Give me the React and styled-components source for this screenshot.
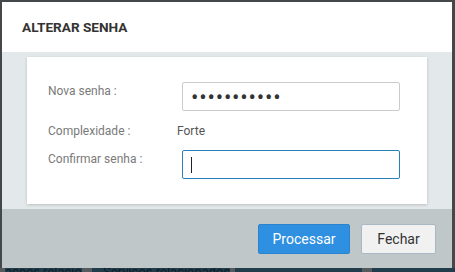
import { styled, createGlobalStyle } from "styled-components";

const GlobalStyle = createGlobalStyle`
    html, body {
        margin: 0;
        padding: 0;
    }
    body {
        font-family: Roboto, "Liberation Sans", Arial, sans-serif;
        background: #45484b;
    }
`

const Screen = styled.div`
    width: 455px;
    height: 272px;
    box-sizing: border-box;
    padding: 2px 3px 0 2px;
    background: #45484b;
    display: flex;
    flex-direction: column;
    overflow: hidden;
`

const Modal = styled.div`
    height: 266px;
    flex: none;
    display: flex;
    flex-direction: column;
    background: #e3e8ea;
`

const Header = styled.div`
    height: 50px;
    flex: none;
    background: #fff;
    display: flex;
    align-items: center;
    padding-left: 20px;
`

const Title = styled.h2`
    margin: 0;
    font-size: 13.6px;
    font-weight: 700;
    color: #333;
`

const Body = styled.div`
    height: 157px;
    box-sizing: border-box;
    padding: 5px 25px;
`

const Card = styled.div`
    height: 147px;
    box-sizing: border-box;
    background: #fff;
    box-shadow: 0 1px 3px rgba(0, 0, 0, 0.18);
    padding: 25px 27px 0 21px;
    display: flex;
    flex-direction: column;
    gap: 11px;
`

const Row = styled.div`
    display: flex;
    align-items: flex-start;
`

const Label = styled.label`
    width: 129px;
    flex: none;
    font-size: 12px;
    line-height: 16px;
    padding-top: 1px;
    color: #7a7a7a;
`

const Value = styled.span`
    font-size: 12px;
    line-height: 16px;
    padding-top: 1px;
    color: #555;
`

const Field = styled.div`
    position: relative;
    margin-left: 5px;
`

const Input = styled.input`
    width: 218px;
    height: 29px;
    box-sizing: border-box;
    border: 1px solid ${p => (p.$focused ? "#2a80b9" : "#cccccc")};
    border-radius: 2px;
    padding: 2px 8px 0;
    font-family: Roboto, "Liberation Sans", sans-serif;
    font-size: 22px;
    letter-spacing: 0.8px;
    color: #333;
    outline: none;
    background: #fff;
`

const Caret = styled.span`
    position: absolute;
    left: 9px;
    top: 7px;
    width: 1px;
    height: 16px;
    background: #222;
`

const Footer = styled.div`
    flex: 1;
    background: #c0c7c9;
    display: flex;
    justify-content: flex-end;
    align-items: flex-start;
    gap: 11px;
    padding: 15px 16px 0 0;
`

const Button = styled.button`
    height: 30px;
    width: ${p => p.$w}px;
    box-sizing: border-box;
    border-radius: 2px;
    font-family: Roboto, "Liberation Sans", sans-serif;
    font-size: 14px;
    padding: 0;
    cursor: pointer;
    color: ${p => (p.$primary ? "#fff" : "#333")};
    background: ${p => (p.$primary ? "#2f8fe0" : "#f1f1f1")};
    border: 1px solid ${p => (p.$primary ? "#2a83cf" : "#a9b8c2")};
`

const Strip = styled.div`
    height: 4px;
    flex: none;
    margin: 0 -3px 0 -2px;
    background: #213d4c;
    display: flex;
    overflow: hidden;
`

const Tab = styled.span`
    width: ${p => p.$w}px;
    flex: none;
    box-sizing: border-box;
    padding-left: ${p => p.$pad || 0}px;
    background: ${p => (p.$dark ? "#555a5e" : "transparent")};
    font-size: 13px;
    line-height: 13px;
    margin-top: -3px;
    color: #0e1c24;
    white-space: nowrap;
    overflow: hidden;
`

function App() {
    return (
        <>
            <GlobalStyle />
            <Screen>
                <Modal>
                    <Header>
                        <Title>ALTERAR SENHA</Title>
                    </Header>
                    <Body>
                        <Card>
                            <Row>
                                <Label>Nova senha :</Label>
                                <Field>
                                    <Input type="password" defaultValue="senhaforte1" readOnly />
                                </Field>
                            </Row>
                            <Row>
                                <Label>Complexidade :</Label>
                                <Value>Forte</Value>
                            </Row>
                            <Row>
                                <Label>Confirmar senha :</Label>
                                <Field>
                                    <Input type="password" $focused readOnly />
                                    <Caret />
                                </Field>
                            </Row>
                        </Card>
                    </Body>
                    <Footer>
                        <Button $primary $w={92}>Processar</Button>
                        <Button $w={75}>Fechar</Button>
                    </Footer>
                </Modal>
                <Strip>
                    <Tab $w={5} $dark />
                    <Tab $w={77}>ações relacionados</Tab>
                    <Tab $w={10} $dark />
                    <Tab $w={138} $pad={11}>Serviços relacionados</Tab>
                    <Tab $w={5} $dark />
                    <Tab $w={127} />
                    <Tab $w={10} $dark />
                    <Tab $w={88} />
                </Strip>
            </Screen>
        </>
    );
}

export default App;
